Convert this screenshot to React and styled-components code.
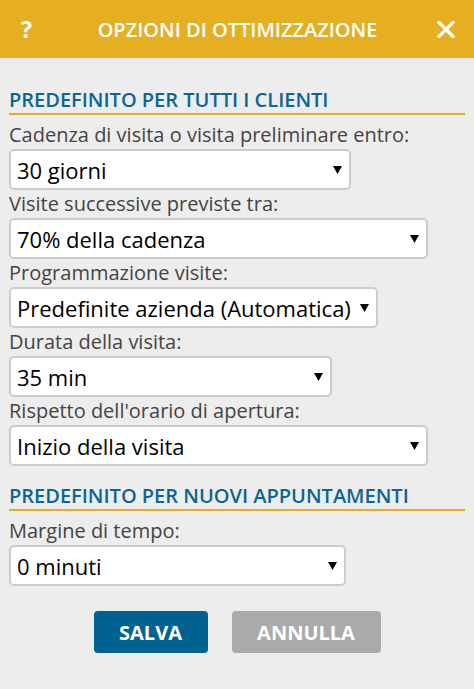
import React from "react";
import styled, { createGlobalStyle } from "styled-components";

const Global = createGlobalStyle`
  html, body { margin: 0; padding: 0; background: #ededed; }
  body { font-family: "Open Sans", "Liberation Sans", sans-serif; }
`;

const Page = styled.div`
  width: 474px;
  min-height: 689px;
  background: #ededed;
`;

const Header = styled.div`
  height: 58px;
  background: #e6af22;
  display: flex;
  align-items: center;
  justify-content: space-between;
  padding: 0 18px 0 21px;
  box-sizing: border-box;
  color: #fff;
`;

const HelpIcon = styled.span`
  font-size: 23px;
  font-weight: 700;
  width: 20px;
  line-height: 1;
`;

const Title = styled.h1`
  margin: 0 0 0 -2px;
  font-size: 20px;
  font-weight: 600;
  letter-spacing: 0;
`;

const CloseBtn = styled.span`
  width: 20px;
  height: 20px;
  display: flex;
  align-items: center;
  justify-content: center;
`;

const Body = styled.div`
  padding: 30px 9px 0 9px;
`;

const SectionTitle = styled.h2`
  margin: ${(p) => (p.$first ? "0" : "18px")} 0 6px;
  font-size: 20px;
  line-height: 24px;
  font-weight: 600;
  color: #0b6595;
  padding-bottom: 1px;
  border-bottom: 2px solid #e6af22;
`;

const Label = styled.div`
  font-size: 20px;
  line-height: 28px;
  color: #444;
`;

const SelectBox = styled.div`
  width: ${(p) => p.$w}px;
  height: 41px;
  box-sizing: border-box;
  background: #fff;
  border: 2px solid #cccccc;
  border-radius: 5px;
  display: flex;
  align-items: center;
  justify-content: space-between;
  padding: 0 7px 0 6px;
  font-size: 22px;
  color: #000;
`;

const Arrow = () => (
  <svg width="9" height="8" viewBox="0 0 9 8">
    <path d="M0 0 H9 L4.5 8 Z" fill="#000" />
  </svg>
);

const Select = ({ w, value }) => (
  <SelectBox $w={w}>
    <span>{value}</span>
    <Arrow />
  </SelectBox>
);

const Buttons = styled.div`
  display: flex;
  justify-content: center;
  gap: 24px;
  margin-top: 25px;
`;

const Button = styled.button`
  height: 42px;
  width: ${(p) => p.$w}px;
  border: none;
  border-radius: 4px;
  background: ${(p) => (p.$primary ? "#00628f" : "#aaaaaa")};
  color: #fff;
  font-family: "Open Sans", "Liberation Sans", sans-serif;
  font-weight: 700;
  font-size: 20px;
  padding: 0;
  cursor: pointer;
`;

export default function App() {
  return (
    <Page>
      <Global />
      <Header>
        <HelpIcon>?</HelpIcon>
        <Title>OPZIONI DI OTTIMIZZAZIONE</Title>
        <CloseBtn>
          <svg width="18" height="17" viewBox="0 0 18 17">
            <path d="M2 1.5 L16 15.5 M16 1.5 L2 15.5" stroke="#fff" strokeWidth="3.2" strokeLinecap="square" />
          </svg>
        </CloseBtn>
      </Header>
      <Body>
        <SectionTitle $first>PREDEFINITO PER TUTTI I CLIENTI</SectionTitle>
        <Label>Cadenza di visita o visita preliminare entro:</Label>
        <Select w={342} value="30 giorni" />
        <Label>Visite successive previste tra:</Label>
        <Select w={419} value="70% della cadenza" />
        <Label>Programmazione visite:</Label>
        <Select w={369} value="Predefinite azienda (Automatica)" />
        <Label>Durata della visita:</Label>
        <Select w={323} value="35 min" />
        <Label>Rispetto dell'orario di apertura:</Label>
        <Select w={419} value="Inizio della visita" />
        <SectionTitle>PREDEFINITO PER NUOVI APPUNTAMENTI</SectionTitle>
        <Label>Margine di tempo:</Label>
        <Select w={337} value="0 minuti" />
        <Buttons>
          <Button $primary $w={114}>SALVA</Button>
          <Button $w={149}>ANNULLA</Button>
        </Buttons>
      </Body>
    </Page>
  );
}
